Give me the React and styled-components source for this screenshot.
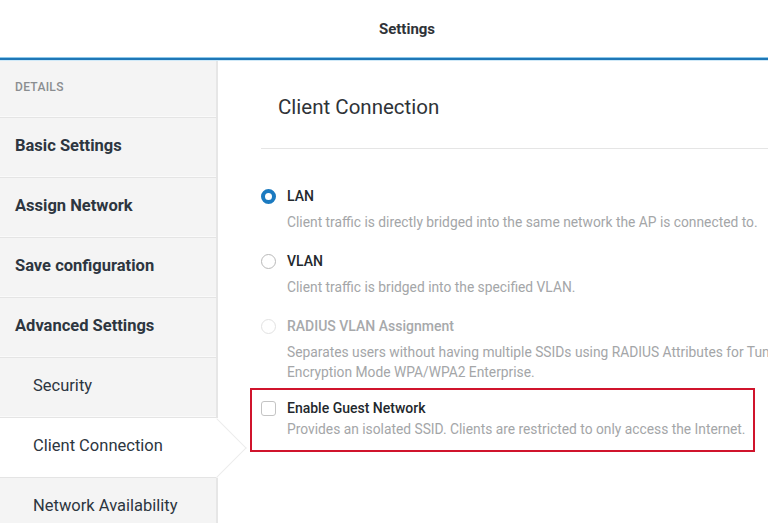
import React from "react";
import styled, { createGlobalStyle, css } from "styled-components";

const Global = createGlobalStyle`
  html, body { margin: 0; padding: 0; background: #fff; }
  body { font-family: Roboto, "Noto Sans", "Liberation Sans", sans-serif; color: #2d3640; overflow: hidden; }
  * { box-sizing: border-box; }
`;

const Page = styled.div`
  width: 768px;
  height: 523px;
  display: flex;
  flex-direction: column;
  overflow: hidden;
`;

const Header = styled.header`
  height: 57px;
  flex: 0 0 57px;
  display: flex;
  align-items: center;
  justify-content: center;
  padding-left: 46px;
  font-size: 15px;
  font-weight: 700;
  color: #2f3338;
`;

const BlueRule = styled.div`
  flex: 0 0 4px;
  border-top: 1px solid #8cc8ea;
  border-bottom: 1px solid #cfe9f8;
  background: #1f77b6;
`;

const Body = styled.div`
  flex: 1;
  display: flex;
  min-height: 0;
`;

const Sidebar = styled.nav`
  flex: 0 0 218px;
  display: flex;
  flex-direction: column;
  position: relative;
  z-index: 2;
`;

const NavItem = styled.div`
  position: relative;
  height: ${(p) => p.$h || 60}px;
  flex: 0 0 ${(p) => p.$h || 60}px;
  display: flex;
  align-items: center;
  padding-left: ${(p) => (p.$sub ? 33 : 15)}px;
  padding-bottom: 4px;
  background: #f4f4f4;
  border-bottom: 1px solid #e4e4e4;
  border-right: 2px solid #e6e6e6;
  box-shadow: inset 0 -1px 0 #fafafa;
  font-size: 16.5px;
  font-weight: ${(p) => (p.$bold ? 700 : 400)};
  color: #2d3640;
  ${(p) =>
    p.$label &&
    css`
      font-size: 12px;
      font-weight: 500;
      color: #8a8d90;
      letter-spacing: 0.3px;
      padding-bottom: 4px;
    `}
  ${(p) =>
    p.$active &&
    css`
      background: #fff;
      border-right-color: transparent;
      box-shadow: none;
      &::after {
        content: "";
        position: absolute;
        right: -22px;
        top: 50%;
        width: 41px;
        height: 41px;
        background: #fff;
        border-top: 1px solid #ececec;
        border-right: 1px solid #ececec;
        transform: translateY(-50%) rotate(45deg);
      }
    `}
`;

const Main = styled.main`
  flex: 0 0 900px;
  padding: 32px 0 0 43px;
  display: flex;
  flex-direction: column;
`;

const Title = styled.h1`
  margin: 0 0 0 17px;
  font-size: 20.5px;
  font-weight: 400;
  line-height: 28px;
  color: #2f3338;
`;

const Divider = styled.hr`
  margin: 27px 0 0;
  border: 0;
  border-top: 1px solid #e5e5e5;
`;

const Options = styled.div`
  display: flex;
  flex-direction: column;
  gap: 19px;
  margin-top: 37px;
`;

const Option = styled.div`
  display: grid;
  grid-template-columns: 15px auto;
  column-gap: 11px;
  row-gap: ${(p) => (p.$tight ? 1 : 6)}px;
  align-items: center;
`;

const Highlight = styled.div`
  margin: -13px 0 0 -11px;
  width: 505px;
  border: 2px solid #d0142c;
  padding: 8px 0 11px 9px;
`;

const Radio = styled.span`
  width: 15px;
  height: 15px;
  border-radius: 50%;
  background: #fff;
  ${(p) =>
    p.$checked
      ? css`border: 4px solid #1b7ac0;`
      : css`border: 1px solid ${p.$disabled ? "#e2e2e2" : "#b9b9b9"};`}
`;

const Checkbox = styled.span`
  width: 15px;
  height: 15px;
  border-radius: 3px;
  border: 1px solid #c4c4c4;
  background: #fff;
`;

const Label = styled.span`
  font-size: 14px;
  line-height: 20px;
  font-weight: 500;
  color: ${(p) => (p.$disabled ? "#a7a9ab" : "#23282d")};
`;

const Desc = styled.div`
  grid-column: 2;
  font-size: 13.8px;
  line-height: 20px;
  color: #a4a6a8;
  white-space: nowrap;
`;

export default function App() {
  return (
    <>
      <Global />
      <Page>
        <Header>Settings</Header>
        <BlueRule />
        <Body>
          <Sidebar>
            <NavItem $label $h={57}>DETAILS</NavItem>
            <NavItem $bold>Basic Settings</NavItem>
            <NavItem $bold>Assign Network</NavItem>
            <NavItem $bold>Save configuration</NavItem>
            <NavItem $bold>Advanced Settings</NavItem>
            <NavItem $sub>Security</NavItem>
            <NavItem $sub $active>Client Connection</NavItem>
            <NavItem $sub>Network Availability</NavItem>
          </Sidebar>
          <Main>
            <Title>Client Connection</Title>
            <Divider />
            <Options>
              <Option>
                <Radio $checked />
                <Label>LAN</Label>
                <Desc>Client traffic is directly bridged into the same network the AP is connected to.</Desc>
              </Option>
              <Option>
                <Radio />
                <Label>VLAN</Label>
                <Desc>Client traffic is bridged into the specified VLAN.</Desc>
              </Option>
              <Option>
                <Radio $disabled />
                <Label $disabled>RADIUS VLAN Assignment</Label>
                <Desc>
                  Separates users without having multiple SSIDs using RADIUS Attributes for Tunnel Protocol. Requires
                  <br />
                  Encryption Mode WPA/WPA2 Enterprise.
                </Desc>
              </Option>
              <Highlight>
                <Option $tight>
                  <Checkbox />
                  <Label>Enable Guest Network</Label>
                  <Desc>Provides an isolated SSID. Clients are restricted to only access the Internet.</Desc>
                </Option>
              </Highlight>
            </Options>
          </Main>
        </Body>
      </Page>
    </>
  );
}
